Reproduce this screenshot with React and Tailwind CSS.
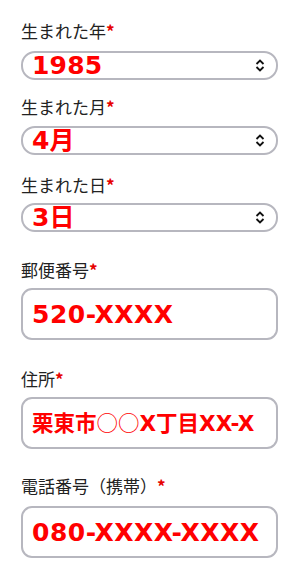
const labelFont = { fontFamily: '"Noto Sans CJK JP", "Noto Sans", sans-serif' };
const valueFont = { fontFamily: '"DejaVu Sans", "Noto Sans CJK JP", sans-serif' };
const cjkFont = { fontFamily: '"Noto Sans CJK JP", sans-serif' };

function Label({ children, className }) {
  return (
    <div className={"text-[17px] leading-[22px] text-[#222] " + className} style={labelFont}>
      {children}
      <span className="text-[#e60000] font-bold">*</span>
    </div>
  );
}

function Chevrons() {
  return (
    <svg width="12" height="15" viewBox="0 0 12 15" fill="none" stroke="#111" strokeWidth="1.8">
      <path d="M2.5 6 L6 2.5 L9.5 6" />
      <path d="M2.5 9 L6 12.5 L9.5 9" />
    </svg>
  );
}

function SelectBox({ value, className }) {
  return (
    <div className={"h-[29px] rounded-[14px] border-2 border-[#b7b7bf] flex items-center justify-between pl-[9px] pr-[10px] " + className}>
      <span className="text-[25px] leading-none font-bold text-[#ff0000] tracking-[0.2px]" style={valueFont}>
        {value}
      </span>
      <Chevrons />
    </div>
  );
}

function InputBox({ children, small, className }) {
  return (
    <div className={"h-[52px] rounded-[11px] border-2 border-[#b7b7bf] flex items-center pl-[9px] " + className}>
      <span
        className={
          "leading-none font-bold text-[#ff0000] whitespace-nowrap " +
          (small ? "text-[21.5px]" : "text-[25px] tracking-[0.5px]")
        }
        style={valueFont}
      >
        {children}
      </span>
    </div>
  );
}

export default function App() {
  return (
    <div className="w-[300px] h-[585px] bg-white pl-[21px] pr-[22px] pt-[20px]">
      <Label>生まれた年</Label>
      <SelectBox value="1985" className="mt-[9px]" />

      <Label className="mt-[16px]">生まれた月</Label>
      <SelectBox value="4月" className="mt-[8px]" />

      <Label className="mt-[19px]">生まれた日</Label>
      <SelectBox value="3日" className="mt-[7px]" />

      <Label className="mt-[27px]">郵便番号</Label>
      <InputBox className="mt-[7px]">520-XXXX</InputBox>

      <Label className="mt-[28px]">住所</Label>
      <InputBox small className="mt-[7px]">
        栗東市<span className="font-normal" style={cjkFont}>○○</span>X丁目XX-X
      </InputBox>

      <Label className="mt-[26px]">電話番号（携帯）</Label>
      <InputBox className="mt-[9px]">080-XXXX-XXXX</InputBox>
    </div>
  );
}
